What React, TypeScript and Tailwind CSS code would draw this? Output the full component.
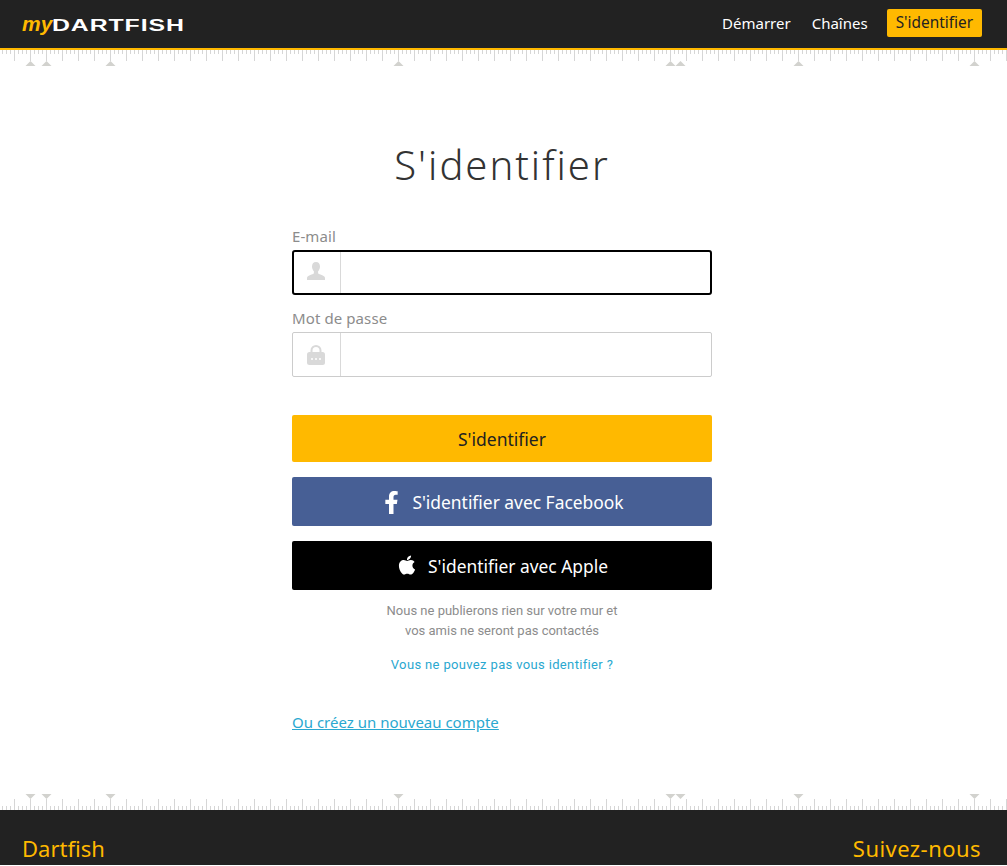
import { FaApple, FaFacebookF } from "react-icons/fa"

const font = "font-['Noto_Sans',sans-serif]"
const markers = [30, 46, 110, 398, 670, 680, 798, 974]
const ticks = Array.from({ length: 252 }, (_, i) => 2 + i * 4)

const Ruler = ({ flip = false }: { flip?: boolean }) => {
  return (
    <svg width="1007" height="16" className={`block ${flip ? "-scale-y-100" : ""}`}>
      {ticks.map((x) => (
        <rect key={x} x={x} y={0} width={1} height={(x - 14) % 16 === 0 ? 11 : 4} fill="#d6d6d6" />
      ))}
      {markers.map((x) => (
        <polygon key={x} points={`${x + 0.5},11 ${x + 5.5},16 ${x - 4.5},16`} fill="#d2d2ce" />
      ))}
    </svg>
  )
}

const UserIcon = () => (
  <svg width="20" height="18" viewBox="0 0 20 18" fill="#d9d9d9" className="mb-[3px]">
    <path d="M10 0c2.7 0 4 2 4 4.4 0 2-1 3.800-1.900 4.800v1.700c0 .7 1 1.100 3 1.900 2.500 1 3.900 1.800 3.900 3.200v2H1v-2c0-1.400 1.400-2.200 3.900-3.200 2-.8 3-1.200 3-1.900V9.200C7 8.200 6 6.400 6 4.400 6 2 7.300 0 10 0z" />
  </svg>
)

const LockIcon = () => (
  <svg width="18" height="20" viewBox="0 0 18 20">
    <path d="M4.500 9V5.500a4.500 4.500 0 0 1 9 0V9" fill="none" stroke="#d9d9d9" strokeWidth="2" />
    <rect x="0" y="7" width="18" height="13" rx="2.500" fill="#d9d9d9" />
    <circle cx="5" cy="14" r="1" fill="#fff" />
    <circle cx="9" cy="14" r="1" fill="#fff" />
    <circle cx="13" cy="14" r="1" fill="#fff" />
  </svg>
)

const Header = () => {
  return (
    <header className="flex h-[50px] items-center justify-between border-b-2 border-[#ffb900] bg-[#222222] pb-[2px] pl-[22px] pr-[25px]">
      <div className="flex items-baseline">
        <span className="w-[30px] font-['Liberation_Sans',sans-serif] text-[21px] font-bold italic leading-none text-[#ffb900]">my</span>
        <span className="inline-block origin-left scale-x-[1.55] font-['Liberation_Sans',sans-serif] text-[16px] font-bold leading-none tracking-[0.6px] text-white">DARTFISH</span>
      </div>
      <nav className="flex items-center text-[15px]">
        <a className="text-white">Démarrer</a>
        <a className="ml-[21px] text-white">Chaînes</a>
        <a className="ml-[19px] flex h-7 items-center rounded-[2px] bg-[#ffb900] px-[9px] text-[15.4px] text-[#222222]">S'identifier</a>
      </nav>
    </header>
  )
}

const Field = ({ label, icon, focused }: { label: string; icon: React.ReactNode; focused?: boolean }) => {
  return (
    <div>
      <label className="block text-[15px] leading-[20px] tracking-[0.1px] text-[#8c8c8c]">{label}</label>
      <div className={`mt-[4px] flex h-[45px] ${focused ? "rounded-[3px] border-2 border-black" : "rounded-[2px] border border-[#cccccc]"}`}>
        <div className={`flex items-center justify-center border-r border-[#d9d9d9] pr-[2px] ${focused ? "w-[47px]" : "w-[48px]"}`}>{icon}</div>
        <input className="min-w-0 flex-1 outline-none" />
      </div>
    </div>
  )
}

export default function App() {
  return (
    <div className={`${font} min-h-[865px] bg-white`}>
      <Header />
      <Ruler />
      <main className="flex justify-center pr-[3px]">
        <div className="w-[420px] pt-[71px]">
          <h1 className="text-center text-[40px] font-light leading-[56px] tracking-[2px] text-[#333333]">S'identifier</h1>
          <div className="mt-[33px]">
            <Field label="E-mail" icon={<UserIcon />} focused />
          </div>
          <div className="mt-[13px]">
            <Field label="Mot de passe" icon={<LockIcon />} />
          </div>
          <button className="mt-[38px] flex h-[47px] w-full items-center justify-center rounded-[2px] bg-[#ffb900] pt-[2px] text-[17.5px] text-[#222222]">S'identifier</button>
          <button className="mt-[15px] flex h-[49px] w-full items-center justify-center rounded-[2px] bg-[#475f95] pt-[2px] text-[17.4px] text-white">
            <FaFacebookF className="mr-[9px] text-[23px]" />
            S'identifier avec Facebook
          </button>
          <button className="mt-[15px] flex h-[49px] w-full items-center justify-center rounded-[2px] bg-black pt-[2px] text-[17.4px] text-white">
            <FaApple className="mb-[3px] mr-[10px] text-[22px]" />
            S'identifier avec Apple
          </button>
          <p className="mt-[11px] text-center font-['Roboto',sans-serif] text-[13px] leading-5 text-[#8c8c8c]">
            Nous ne publierons rien sur votre mur et
            <br />
            vos amis ne seront pas contactés
          </p>
          <a className="mt-[14px] block text-center font-['Roboto',sans-serif] text-[13px] leading-5 tracking-[0.35px] text-[#2aa8d0]">Vous ne pouvez pas vous identifier ?</a>
          <a className="mt-[37px] block text-[15px] leading-5 text-[#2aa8d0] underline">Ou créez un nouveau compte</a>
        </div>
      </main>
      <div className="absolute inset-x-0 top-[794px]">
        <Ruler flip />
      </div>
      <footer className="absolute inset-x-0 top-[810px] flex h-[55px] items-start justify-between bg-[#222222] pl-[22px] pr-[26px] pt-[23px] text-[22px] leading-[30px] text-[#ffb900]">
        <span>Dartfish</span>
        <span className="tracking-[0.45px]">Suivez-nous</span>
      </footer>
    </div>
  )
}
